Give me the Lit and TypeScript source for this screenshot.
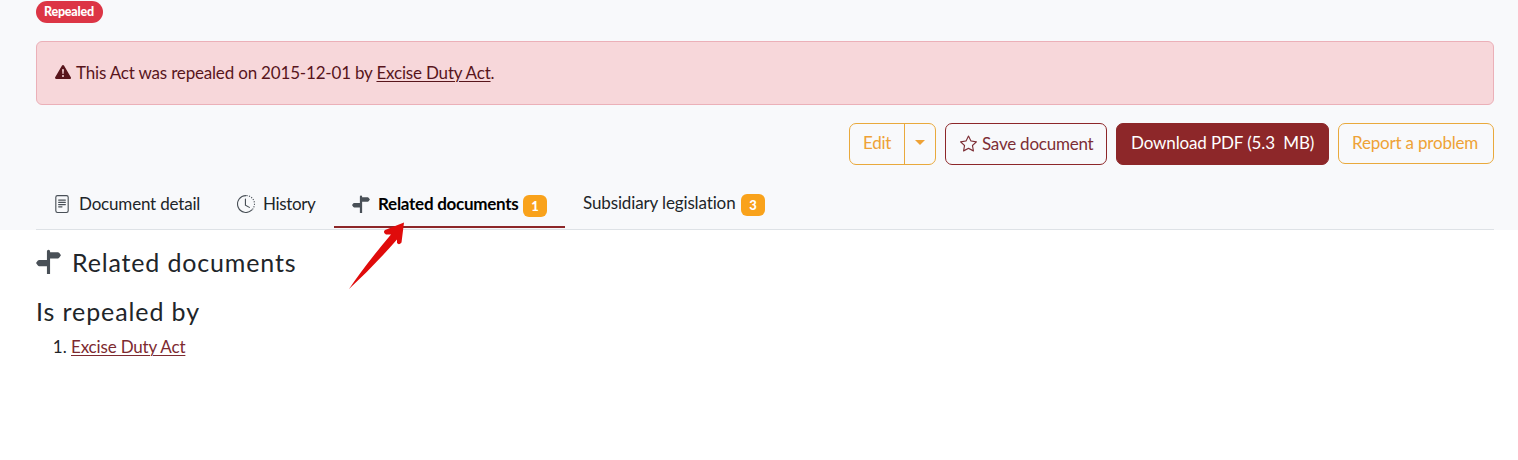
import { LitElement, html, svg, css } from "lit";
import { customElement } from "lit/decorators.js";

const signpost = svg`<path d="M7 7V1.414a1 1 0 0 1 2 0V2h5a1 1 0 0 1 .8.4l.975 1.3a.5.5 0 0 1 0 .6L14.8 5.6a1 1 0 0 1-.8.4H9v10H7v-5H2a1 1 0 0 1-.8-.4L.225 9.3a.5.5 0 0 1 0-.6L1.2 7.4A1 1 0 0 1 2 7z"/>`;

@customElement("app-root")
export class AppRoot extends LitElement {
  static styles = css`
    :host { display: block; position: relative; height: 460px; overflow: hidden; background: #fff;
      color: #212529; font: 17px/26px Lato, "Open Sans", sans-serif; }
    * { box-sizing: border-box; }
    svg { fill: currentColor; display: block; flex: none; }
    .hero { height: 230px; background: #f8f9fb; padding: 1px 24px 0 36px; }
    .pill { width: 67px; height: 22px; border-radius: 11px; background: #dc3545; color: #fff;
      font-size: 12.5px; font-weight: 900; line-height: 21px; padding-left: 8px; letter-spacing: -.22px; }
    .alert { margin-top: 18px; height: 64px; border: 1px solid #ebb0b8; border-radius: 6px; background: #f7d7da;
      color: #58151c; display: flex; align-items: center; padding: 0 18px; }
    .alert svg { margin: 0 5px 2px 0; }
    a { color: inherit; text-decoration: underline; text-decoration-thickness: 1px; text-underline-offset: 2px; }
    .w-alert { letter-spacing: -.18px; }
    .w-save { letter-spacing: -.23px; }
    .w-down { letter-spacing: -.13px; }
    .w-report { letter-spacing: -.19px; }
    .w-edit { letter-spacing: -.3px; }
    .w-detail { letter-spacing: -.18px; }
    .w-history { letter-spacing: -.35px; }
    .w-related { letter-spacing: -.27px; }
    .w-sub { letter-spacing: -.13px; }
    .w-h1 { letter-spacing: .84px; }
    .w-h2 { letter-spacing: .9px; }
    .w-link { letter-spacing: -.16px; }
    .actions { display: flex; justify-content: flex-end; gap: 9px; margin-top: 18px; height: 42px; }
    .btn { height: 42px; border: 1px solid #8d2729; border-radius: 7px; color: #7d2e35; display: flex;
      align-items: center; white-space: nowrap; padding-left: 14px; }
    .orange { border-color: #e9a93c; color: #eea236; }
    .group { width: 87px; padding: 0 0 2px 13px; }
    .group .word { width: 41px; }
    .caret { align-self: stretch; margin-bottom: -2px; border-left: 1px solid #e9a93c; width: 31px; padding: 16px 0 0 10px; }
    .save { width: 162px; }
    .save svg { margin: 0 5px 2px 0; }
    .save .word { padding-bottom: 1px; }
    .download { width: 213px; background: #8d2729; color: #fff; padding-bottom: 2px; white-space: pre; }
    .report { width: 156px; height: 41px; padding: 0 0 1px 13px; }
    .tabs { display: flex; margin-top: 14px; height: 51px; border-bottom: 1px solid #dee2e6; }
    .tab { display: flex; padding: 12px 0 0 18px; height: 49px; white-space: nowrap; }
    .tab svg { color: #495057; margin-top: 4px; }
    .t1 { width: 182px; padding-left: 17px; } .t1 .word { margin-left: 8px; }
    .t2 { width: 116px; padding-left: 19px; } .t2 .word { margin-left: 8px; }
    .t3 { width: 231px; border-bottom: 2px solid #8d2729; color: #000; font-weight: 700; }
    .t3 .word { margin-left: 8px; width: 145px; }
    .t4 { padding-top: 11px; }
    .t4 .word { width: 158px; }
    .count { width: 24px; height: 22px; margin-top: 4px; border-radius: 6px; background: #f9a21b; color: #fff;
      font-size: 13px; font-weight: 900; line-height: 22px; text-align: center; }
    .body { padding: 16px 36px; }
    h2 { margin: 0; font-size: 25px; line-height: 32px; font-weight: 400; display: flex; }
    h2 svg { color: #495057; margin: 3px 11px 0 0; }
    h2 + h2 { margin-top: 17px; }
    ol { margin: 8px 0 0; padding-left: 35px; line-height: 24px; }
    li a { color: #7d2a30; }
    .arrow { position: absolute; left: 345px; top: 218px; fill: #e00b0b; }
    .line { fill: none; stroke: currentColor; stroke-linecap: round; }
    .dots { fill: none; stroke: currentColor; stroke-dasharray: 1 1.2; }
  `;

  render() {
    return html`
      <section class="hero">
        <div class="pill">Repealed</div>
        <div class="alert">
          <svg width="16" height="16" viewBox="0 0 16 16"><path d="M8.982 1.566a1.13 1.13 0 0 0-1.96 0L.165 13.233c-.457.778.091 1.767.98 1.767h13.713c.889 0 1.438-.99.98-1.767zM8 5c.535 0 .954.462.9.995l-.35 3.507a.552.552 0 0 1-1.1 0L7.1 5.995A.905.905 0 0 1 8 5m.002 6a1 1 0 1 1 0 2 1 1 0 0 1 0-2"/></svg>
          <span class="word w-alert">This Act was repealed on 2015-12-01 by <a>Excise Duty Act</a>.</span>
        </div>
        <div class="actions">
          <div class="btn orange group"><span class="word w-edit">Edit</span><span class="caret"><svg width="10" height="5" viewBox="0 0 10 5"><path d="M0 0h10L5 5z"/></svg></span></div>
          <div class="btn save"><svg width="17" height="17" viewBox="0 0 16 16"><path d="M2.866 14.85c-.078.444.36.791.746.593l4.39-2.256 4.389 2.256c.386.198.824-.149.746-.592l-.83-4.73 3.522-3.356c.33-.314.16-.888-.282-.95l-4.898-.696L8.465.792a.513.513 0 0 0-.927 0L5.354 5.12l-4.898.696c-.441.062-.612.636-.283.95l3.523 3.356zm4.905-2.767-3.686 1.894.694-3.957a.56.56 0 0 0-.163-.505L1.71 6.745l4.052-.576a.53.53 0 0 0 .393-.288L8 2.223l1.847 3.658a.53.53 0 0 0 .393.288l4.052.575-2.906 2.77a.56.56 0 0 0-.163.506l.694 3.957-3.686-1.894a.5.5 0 0 0-.461 0z"/></svg><span class="word w-save">Save document</span></div>
          <div class="btn download"><span class="word w-down">Download PDF (5.3  MB)</span></div>
          <div class="btn orange report"><span class="word w-report">Report a problem</span></div>
        </div>
        <nav class="tabs">
          <div class="tab t1"><svg width="18" height="18" viewBox="0 0 16 16"><path d="M5 4a.5.5 0 0 0 0 1h6a.5.5 0 0 0 0-1zm-.5 2.5A.5.5 0 0 1 5 6h6a.5.5 0 0 1 0 1H5a.5.5 0 0 1-.5-.5M5 8a.5.5 0 0 0 0 1h6a.5.5 0 0 0 0-1zm0 2a.5.5 0 0 0 0 1h3a.5.5 0 0 0 0-1z"/><path d="M2 2a2 2 0 0 1 2-2h8a2 2 0 0 1 2 2v12a2 2 0 0 1-2 2H4a2 2 0 0 1-2-2zm10-1H4a1 1 0 0 0-1 1v12a1 1 0 0 0 1 1h8a1 1 0 0 0 1-1V2a1 1 0 0 0-1-1"/></svg><span class="word w-detail">Document detail</span></div>
          <div class="tab t2"><svg width="18" height="18" viewBox="0 0 16 16"><path class="line" d="M7.5 3.5V9l3.5 2M8 .5a7.5 7.5 0 1 0 5.3 12.8"/><path class="dots" d="M8.5 .5a7.5 7.5 0 0 1 5.3 12.3"/></svg><span class="word w-history">History</span></div>
          <div class="tab t3"><svg width="18" height="18" viewBox="0 0 16 16">${signpost}</svg><span class="word w-related">Related documents</span><span class="count">1</span></div>
          <div class="tab t4"><span class="word w-sub">Subsidiary legislation</span><span class="count">3</span></div>
        </nav>
      </section>
      <main class="body">
        <h2><svg width="25" height="25" viewBox="0 0 16 16">${signpost}</svg><span class="w-h1">Related documents</span></h2>
        <h2><span class="w-h2">Is repealed by</span></h2>
        <ol><li><a class="w-link">Excise Duty Act</a></li></ol>
      </main>
      <svg class="arrow" width="62" height="74" viewBox="0 0 62 74"><path d="M59 4.5L40 12Q37.500 14.500 41 16.500L46 16.500Q21 46 4 71Q28 49 52 21.500L52 25Q54 27.500 56.500 24.500Z"/></svg>
    `;
  }
}
